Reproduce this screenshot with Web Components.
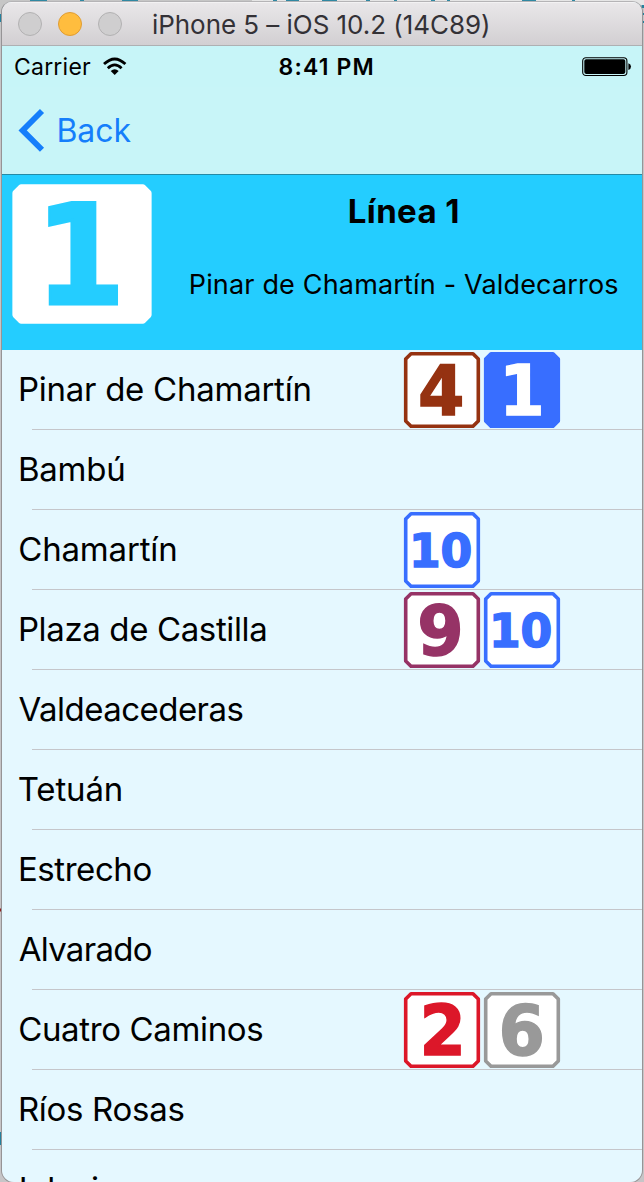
<!DOCTYPE html>
<html lang="es">
<head>
<meta charset="utf-8">
<title>Línea 1</title>
<style>
html,body{margin:0;height:1182px;overflow:hidden;font-family:Inter,"Liberation Sans",sans-serif;background:#c6c5c7}
</style>
</head>
<body>
<sim-window>
  <title-bar><fit-label size="26" left="153" ink="335" color="#333136">iPhone 5 – iOS 10.2 (14C89)</fit-label></title-bar>
  <status-bar></status-bar>
  <nav-bar><fit-label size="32" left="-.5" ink="73">Back</fit-label></nav-bar>
  <line-header>
    <fit-label slot="name" size="33" weight="700" ink="108.5">Línea 1</fit-label>
    <fit-label slot="route" size="27" ink="426.5">Pinar de Chamartín - Valdecarros</fit-label>
  </line-header>
  <station-list></station-list>
</sim-window>
<script>
const make = (name, html, setup) => customElements.define(name, class extends HTMLElement {
  connectedCallback() {
    if (this.shadowRoot) return;
    this.attachShadow({mode: 'open'}).innerHTML = html;
    if (setup) setup.call(this, this.shadowRoot);
  }
});

/* Text label whose tracking is derived from the ink width it should occupy. */
const ctx = document.createElement('canvas').getContext('2d');
make('fit-label', `<style>:host{display:block;white-space:pre;line-height:1}span{display:block}</style><span><slot></slot></span>`, function () {
  const text = this.textContent, size = +this.getAttribute('size'), weight = this.getAttribute('weight') || 400;
  const ink = +this.getAttribute('ink'), left = +(this.getAttribute('left') || 0);
  ctx.font = `${weight} ${size}px Inter`;
  const m = ctx.measureText(text);
  const gap = (ink - m.actualBoundingBoxRight - m.actualBoundingBoxLeft) / (text.length - 1);
  Object.assign(this.style, {fontSize: size + 'px', fontWeight: weight, letterSpacing: gap.toFixed(3) + 'px',
    marginLeft: (left + m.actualBoundingBoxLeft).toFixed(2) + 'px', width: ink + 'px', color: this.getAttribute('color') || 'inherit'});
});

make('sim-window', `<style>
:host{display:block;position:relative;width:644px;height:1182px;overflow:hidden}
.desk{position:absolute;inset:0}
.win{position:relative;display:flex;flex-direction:column;margin:2px 2px 0;height:1180px;border-radius:10px 10px 12px 12px;overflow:hidden;background:#e5f8ff;color:#000}
.edge{position:absolute;left:1px;top:1px;width:640px;height:1180px;border:1px solid #969496;border-top-color:#b5b4b6;border-radius:11px 11px 13px 13px}
</style>
<svg class="desk" width="644" height="1182"><rect width="252" height="32" fill="#c6c6c6"/><rect x="252" width="392" height="6" fill="#e6e6e6"/>
<path d="M30 1H47M80 1H84M122 1H138M273 1H277M286 1H299M322 1H337M366 1H370M394 1H397M431 1H435M447 1H450M522 1H536M572 1H575" stroke="#3088a2" stroke-width="2"/>
<path d="M0 14V22M643 5V8M643 13V15M643 21V23M0 1132V1145" stroke="#23809d" stroke-width="3"/><path d="M0 910H2" stroke="#8c2020" stroke-width="3"/></svg>
<div class="edge"></div><div class="win"><slot></slot></div>`);

make('title-bar', `<style>
:host{display:flex;position:relative;flex:none;align-items:center;height:44px;box-sizing:border-box;background:linear-gradient(#e9e7e9,#d2cfd2);border-top:1px solid #f3f2f3;border-bottom:1px solid #aeb0b2}
.dots{display:flex;gap:16px;padding-left:16px;width:108px;margin-right:-126px;box-sizing:content-box;flex:none}
i{box-sizing:border-box;width:24px;height:24px;border-radius:50%;background:#cfcecf;border:1px solid #b2b1b2}
.min{background:#ffbd3e;border-color:#df9c34}
::slotted(*){padding-top:2px}
</style><div class="dots"><i></i><i class="min"></i><i></i></div><slot></slot>`);

make('status-bar', `<style>
:host{display:grid;grid-template-columns:101px 176px 1fr auto;align-items:center;flex:none;height:41px;background:#c7f5f8;padding-right:10px}
svg{display:block}
fit-label{padding-top:2px}
</style><fit-label size="23" left="13" ink="76">Carrier</fit-label>
<svg width="26" height="20" viewBox="0 0 26 20" fill="none" stroke="#000" stroke-width="2.8"><path d="M1 7.1Q11.7 -3.3 22.4 7.1M4.8 11.2Q11.7 4.6 18.6 11.2"/><path d="M7.7 14.1Q11.7 10.6 15.7 14.1L11.7 18Z" fill="#000" stroke="none"/></svg>
<fit-label size="23" weight="600" left=".5" ink="93">8:41 PM</fit-label>
<svg width="50" height="20" viewBox="0 0 50 20"><rect x=".7" y=".7" width="44.2" height="17.8" rx="3.2" fill="none" stroke="#000" stroke-width="1.1"/><rect x="2.3" y="2.3" width="41" height="14.6" rx="1.8"/><path d="M46.4 6.2Q49 7 49 9.6T46.4 13Z"/></svg>`);

make('nav-bar', `<style>
:host{display:flex;flex:none;align-items:center;height:88px;box-sizing:border-box;padding:0 0 2px 16px;background:#c8f5f8;border-bottom:1px solid #268aa5;color:#157efb}
svg{margin-right:13px;flex:none}
::slotted(*){padding-top:2px}
</style><svg width="28" height="44" viewBox="0 0 28 44"><path d="M24 3L4.6 22.4L24 41.8" fill="none" stroke="#157efb" stroke-width="5.8"/></svg><slot></slot>`);

/* Metro line badge: chamfered tile with the line number. */
make('line-badge', `<style>:host{display:block;flex:none}svg{display:block;overflow:visible}path{stroke-linejoin:round}text{font-family:"DejaVu Sans",sans-serif;font-weight:700;text-anchor:middle;stroke-width:1.5}</style>
<svg viewBox="0 0 76 76"><path stroke-width="3.6"/><text></text></svg>`, function (root) {
  const n = this.getAttribute('line'), size = this.getAttribute('size') || 76, big = size > 100, two = n.length > 1;
  const solid = this.hasAttribute('solid'), color = this.getAttribute('color'), fg = this.getAttribute('fg') || color;
  const svg = root.querySelector('svg'), p = root.querySelector('path'), t = root.querySelector('text');
  svg.setAttribute('width', size); svg.setAttribute('height', size);
  p.setAttribute('d', big ? 'M5 2H71L74 5V71L71 74H5L2 71V5Z' : 'M7 1.7H69L74.3 7V69L69 74.3H7L1.7 69V7Z');
  p.setAttribute('stroke', color); p.setAttribute('fill', solid ? color : '#fff');
  t.setAttribute('fill', fg); t.setAttribute('stroke', fg); t.textContent = n;
  t.setAttribute('font-size', two ? 46.5 : big ? 75.5 : 69.5);
  const sx = n === '1' ? .94 : two ? .98 : .96;
  t.setAttribute('transform', `translate(${this.getAttribute('tx') || 37} ${two ? 55.3 : big ? 65.3 : 63.2}) scale(${sx} 1)`);
});

make('line-header', `<style>
:host{display:flex;flex:none;height:175px;background:#24cdff}
line-badge{padding:9px 0 0 10px}
.text{flex:1;display:flex;flex-direction:column;align-items:center;margin-left:36px;padding:20px 24px 0 0;gap:43px}
</style><line-badge line="1" size="140" solid color="#fff" fg="#24cdff" tx="37.1"></line-badge>
<div class="text"><slot name="name"></slot><slot name="route"></slot></div>`);

make('station-row', `<style>
:host{display:grid;grid-template-columns:402px 1fr;flex:none;height:80px;box-sizing:border-box;align-items:center;background:linear-gradient(#c5c6ca,#c5c6ca) 30px 79px/610px 1px no-repeat}
div{display:flex;gap:4px;height:76px}
::slotted(fit-label){padding-bottom:2px}
</style><slot name="name"></slot><div><slot></slot></div>`);

const badge = {
  4: '<line-badge line="4" color="#953211" tx="37.3"></line-badge>',
  1: '<line-badge line="1" solid color="#386eff" fg="#fff" tx="38"></line-badge>',
  10: '<line-badge line="10" color="#386eff" tx="36.6"></line-badge>',
  9: '<line-badge line="9" color="#963366" tx="36.5"></line-badge>',
  2: '<line-badge line="2" color="#dc1729" tx="38.8"></line-badge>',
  6: '<line-badge line="6" color="#999" tx="37.8"></line-badge>'
};
const stations = [
  ['Pinar de Chamartín', 289.5, 18.7, [4, 1]], ['Bambú', 103.3, 18.7, []], ['Chamartín', 156, 18, [10]],
  ['Plaza de Castilla', 245.3, 18.7, [9, 10]], ['Valdeacederas', 224, 17.3, []], ['Tetuán', 102, 17.6, []],
  ['Estrecho', 131.5, 18.7, []], ['Alvarado', 133, 17.5, []], ['Cuatro Caminos', 243, 18, [2, 6]],
  ['Ríos Rosas', 163.5, 18.7, []], ['Iglesia', 94, 19.6, []]
];
make('station-list', `<style>:host{display:flex;flex-direction:column}</style>` + stations.map(([n, w, l, b]) =>
  `<station-row><fit-label slot="name" size="33" left="${l - .8}" ink="${w}">${n}</fit-label>${b.map(k => badge[k]).join('')}</station-row>`).join(''));
</script>
</body>
</html>
